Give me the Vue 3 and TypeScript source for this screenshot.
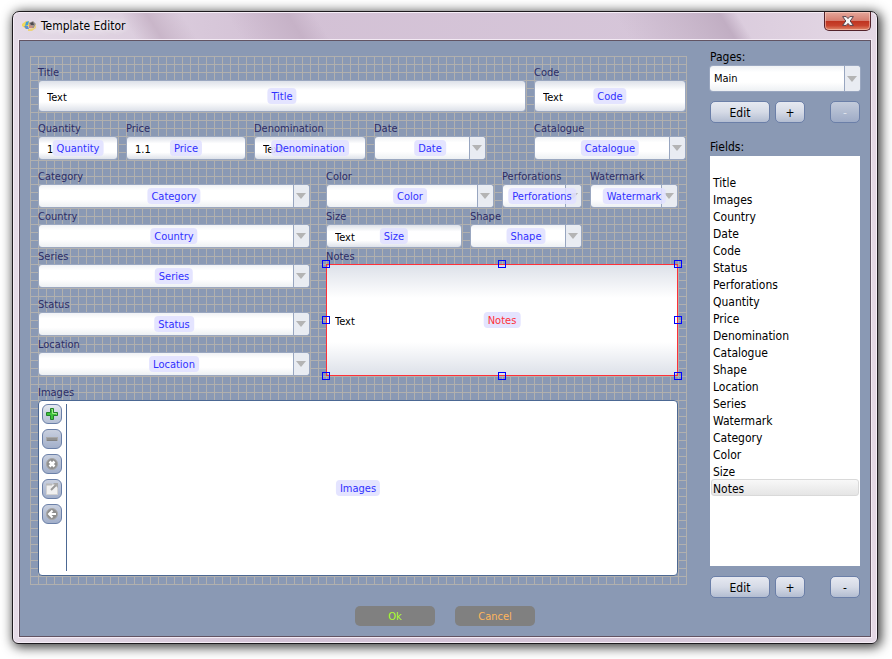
<script setup lang="ts">
import { ref } from 'vue'

type Kind = 'text' | 'combo' | 'images'

interface Field {
  name: string
  kind: Kind
  // Position and size on the canvas, in grid cells
  x: number
  y: number
  w: number
  h: number
  value?: string
}

const CELL = 8

const fields: Field[] = [
  { name: 'Title', kind: 'text', x: 1, y: 3, w: 61, h: 4, value: 'Text' },
  { name: 'Code', kind: 'text', x: 63, y: 3, w: 19, h: 4, value: 'Text' },
  { name: 'Quantity', kind: 'text', x: 1, y: 10, w: 10, h: 3, value: '1' },
  { name: 'Price', kind: 'text', x: 12, y: 10, w: 15, h: 3, value: '1.1' },
  { name: 'Denomination', kind: 'text', x: 28, y: 10, w: 14, h: 3, value: 'Text' },
  { name: 'Date', kind: 'combo', x: 43, y: 10, w: 14, h: 3 },
  { name: 'Catalogue', kind: 'combo', x: 63, y: 10, w: 19, h: 3 },
  { name: 'Category', kind: 'combo', x: 1, y: 16, w: 34, h: 3 },
  { name: 'Color', kind: 'combo', x: 37, y: 16, w: 21, h: 3 },
  { name: 'Perforations', kind: 'combo', x: 59, y: 16, w: 10, h: 3 },
  { name: 'Watermark', kind: 'combo', x: 70, y: 16, w: 11, h: 3 },
  { name: 'Country', kind: 'combo', x: 1, y: 21, w: 34, h: 3 },
  { name: 'Size', kind: 'text', x: 37, y: 21, w: 17, h: 3, value: 'Text' },
  { name: 'Shape', kind: 'combo', x: 55, y: 21, w: 14, h: 3 },
  { name: 'Series', kind: 'combo', x: 1, y: 26, w: 34, h: 3 },
  { name: 'Status', kind: 'combo', x: 1, y: 32, w: 34, h: 3 },
  { name: 'Location', kind: 'combo', x: 1, y: 37, w: 34, h: 3 },
  { name: 'Images', kind: 'images', x: 1, y: 43, w: 80, h: 22 },
  { name: 'Notes', kind: 'text', x: 37, y: 26, w: 44, h: 14, value: 'Text' },
]

const listed = [
  '', 'Title', 'Images', 'Country', 'Date', 'Code', 'Status', 'Perforations', 'Quantity',
  'Price', 'Denomination', 'Catalogue', 'Shape', 'Location', 'Series', 'Watermark',
  'Category', 'Color', 'Size', 'Notes',
]

const handles = ['nw', 'n', 'ne', 'w', 'e', 'sw', 's', 'se']
const tools = ['add', 'remove', 'clear', 'open', 'back']

const selected = ref('Notes')

const place = (f: Field) => ({
  left: `${f.x * CELL}px`,
  top: `${f.y * CELL}px`,
  width: `${f.w * CELL}px`,
  height: `${f.h * CELL}px`,
})
</script>

<template>
  <main class="window">
    <header class="titlebar">
      <svg class="logo" width="16" height="12" viewBox="0 0 16 12" aria-hidden="true">
        <path d="M1 4 L5 1 L9 2 L8 6 L5 9 L1 6z" fill="#f2d75a" />
        <path d="M5 2 L8 1 L7 5 L4 6z" fill="#3f9fd8" />
        <path d="M3 6 L7 6 L8 9 L5 9z" fill="#5b8fd0" />
        <path d="M8 3 L12 1 L15 4 L13 8 L9 8z" fill="#9a928e" />
        <path d="M9 3 L12 2 L13 5 L10 5z" fill="#4d4a50" />
        <path d="M8 5 L12 6 L11 8 L8 8z" fill="#c98b80" />
        <path d="M7 9 L13 8 L15 4 L15 8 L11 11 L7 11z" fill="#edd27a" />
      </svg>
      <h1>Template Editor</h1>
      <button class="close" type="button" aria-label="Close">
        <svg width="12" height="10" viewBox="0 0 12 10">
          <path
            d="M.6.6H4.200L6 2.600 7.800 .6H11.400L8.200 5 11.400 9.400H7.800L6 7.400 4.200 9.400H.6L3.800 5z"
            fill="#f8f8f8" stroke="#54424c" stroke-width="1" stroke-linejoin="round"
          />
        </svg>
      </button>
    </header>

    <form class="client" @submit.prevent>
      <div class="columns">
        <section class="canvas">
          <div
            v-for="f in fields" :key="f.name"
            class="item" :class="{ active: f.name === selected }" :style="place(f)"
            @click="selected = f.name"
          >
            <label class="caption" :for="`f-${f.name}`">{{ f.name }}</label>
            <input
              v-if="f.kind === 'text'" :id="`f-${f.name}`"
              class="box text" type="text" :value="f.value"
            >
            <div v-else-if="f.kind === 'combo'" class="box combo">
              <select :id="`f-${f.name}`"></select>
              <span class="arrow"></span>
            </div>
            <div v-else class="gallery">
              <div class="tools">
                <button
                  v-for="t in tools" :id="t === 'add' ? `f-${f.name}` : undefined" :key="t"
                  class="tool" :class="{ off: t !== 'add' }" type="button" :aria-label="t"
                >
                  <svg width="14" height="14" viewBox="0 0 14 14">
                    <template v-if="t === 'add'">
                      <path d="M5.5 1.5h3v4h4v3h-4v4h-3v-4h-4v-3h4z" fill="#3fc43a" stroke="#23802a" />
                      <path d="M6.5 2.5h1v4h4v1" fill="none" stroke="#a5ec8f" />
                    </template>
                    <template v-else-if="t === 'remove'">
                      <rect x="1.5" y="5.5" width="11" height="3" fill="#929292" stroke="#a9a9a9" />
                      <path d="M2 8.5h10" stroke="#828282" />
                    </template>
                    <template v-else-if="t === 'clear'">
                      <circle cx="7" cy="7" r="5.5" fill="#8e8e8e" stroke="#a6a6a6" />
                      <path d="M4.5 4.5l5 5M9.5 4.5l-5 5" stroke="#fff" stroke-width="2.5" />
                    </template>
                    <template v-else-if="t === 'open'">
                      <path d="M1.5 2.5h11v10h-11z" fill="#f0f0f0" stroke="#d2d2d2" />
                      <path d="M1 2.5h6" stroke="#bbb" stroke-width="2" />
                      <path d="M6 8l5-5" stroke="#999" stroke-width="2" />
                      <path d="M8 1h5v5z" fill="#a9a9a9" />
                    </template>
                    <template v-else>
                      <circle cx="7" cy="7" r="5.5" fill="#8e8e8e" stroke="#a6a6a6" />
                      <path d="M11 7H5M7.5 3.5L4 7l3.5 3.5" fill="none" stroke="#fff" stroke-width="2" />
                    </template>
                  </svg>
                </button>
              </div>
            </div>
            <span class="tag">{{ f.name }}</span>
            <template v-if="f.name === selected">
              <i v-for="h in handles" :key="h" class="handle" :class="h"></i>
            </template>
          </div>
        </section>

        <aside class="side">
          <label for="pages">Pages:</label>
          <div class="box combo">
            <select id="pages"><option>Main</option></select>
            <span class="arrow"></span>
          </div>
          <div class="actions">
            <button class="push wide" type="button">Edit</button>
            <button class="push" type="button">+</button>
            <button class="push last" type="button" disabled>-</button>
          </div>
          <label class="second" for="fields">Fields:</label>
          <select id="fields" v-model="selected" class="list" size="24">
            <option v-for="name in listed" :key="name" :value="name">{{ name }}</option>
          </select>
          <div class="actions">
            <button class="push wide" type="button">Edit</button>
            <button class="push" type="button">+</button>
            <button class="push last" type="button">-</button>
          </div>
        </aside>
      </div>

      <footer class="footer">
        <button class="flat ok" type="submit">Ok</button>
        <button class="flat cancel" type="button">Cancel</button>
      </footer>
    </form>
  </main>
</template>

<style>
body {
  background: #fff;
}
</style>

<style scoped>
* {
  box-sizing: border-box;
}

.window,
.window button,
.window input,
.window select {
  font-family: "DejaVu Sans Condensed", "DejaVu Sans", sans-serif;
  font-size: 12px;
}

.window {
  margin: 11px 14px 15px 12px;
  padding: 0 6px 6px;
  border: 1px solid #1d1a1e;
  border-radius: 7px 7px 6px 6px;
  background:
    linear-gradient(58deg, transparent 0 14%, #c9b6c9 17%, transparent 21% 26%, #c6b2c7 33%, transparent 36% 70%, #c1aec3 82%, transparent 84%) 0 0 / 100% 28px no-repeat,
    linear-gradient(90deg, #e5dbe7, #d3c1d5 30%, #d6c6d9 75%, #e4d8e5);
  box-shadow: inset 0 0 0 1px #f6eef7, 2px 2px 12px 1px rgba(0, 0, 0, 0.8);
}

.titlebar {
  display: flex;
  align-items: flex-start;
  height: 28px;
}

.logo {
  margin: 8px 4px 0 2px;
}

.titlebar h1 {
  flex: 1;
  margin: 0;
  font-size: 12px;
  font-weight: 400;
  line-height: 28px;
  color: #000;
  text-shadow: 0 0 8px #fff, 0 0 8px #fff;
}

.close {
  display: flex;
  align-items: center;
  justify-content: center;
  width: 47px;
  height: 19px;
  padding: 0;
  border: 1px solid #54222b;
  border-top: 0;
  border-radius: 0 0 5px 5px;
  background: linear-gradient(#e5a79b, #d57e70 48%, #bf3420 52%, #c8432e 75%, #e08a6c);
  box-shadow: inset 0 0 0 1px rgba(255, 220, 210, 0.5);
}

.client {
  padding: 8px 10px 10px;
  border: 1px solid #625463;
  outline: 1px solid #f3eaf4;
  background: #8a99b4;
}

.columns {
  display: flex;
  justify-content: space-between;
  align-items: flex-start;
}

.canvas {
  position: relative;
  width: 657px;
  height: 529px;
  margin-top: 7px;
  background:
    linear-gradient(#b1b0ae 1px, transparent 1px) 0 0 / 8px 8px,
    linear-gradient(90deg, #b1b0ae 1px, transparent 1px) 0 0 / 8px 8px;
}

.item {
  position: absolute;
  padding: 1px;
}

.caption {
  position: absolute;
  left: 0;
  bottom: 100%;
  font-size: 11px;
  line-height: 14px;
  color: #2c2c66;
  white-space: nowrap;
}

.box {
  display: block;
  width: 100%;
  height: 100%;
  border: 0;
  border-radius: 3px;
  box-shadow: 0 0 0 1px #9aa7c0;
}

.text {
  padding: 2px 8px 0;
  outline: 0;
  background: linear-gradient(#dde1e9, #fff 30%, #fff 70%, #dde1e9);
  color: #000;
}

.window .text {
  font-size: 11px;
}

.combo {
  display: flex;
  overflow: hidden;
  background: linear-gradient(#f0f2f5, #fff 25%, #fff 65%, #edf0f3);
}

.combo select {
  flex: 1;
  min-width: 0;
  padding: 0 4px;
  appearance: none;
  border: 0;
  outline: 0;
  background: transparent;
  color: #000;
}

.window .combo select {
  font-size: 11px;
}

.arrow {
  display: flex;
  align-items: center;
  justify-content: center;
  width: 16px;
  padding-right: 1px;
  border-left: 1px solid #98a6c0;
  background: #e9ecf2;
  pointer-events: none;
}

.arrow::before {
  content: "";
  border: 5px solid transparent;
  border-top: 6px solid #b4b4b4;
  border-bottom: 0;
}

.tag {
  position: absolute;
  left: 50%;
  top: 50%;
  padding: 1px 4px 0;
  border-radius: 4px;
  background: rgba(224, 224, 255, 0.88);
  font-size: 11px;
  line-height: 15px;
  color: #3030ff;
  white-space: nowrap;
  transform: translate(-50%, -50%);
}

.active::after {
  content: "";
  position: absolute;
  inset: 0;
  border: 1px solid #ff3038;
  pointer-events: none;
}

.active .tag {
  color: #ff3038;
}

.handle {
  position: absolute;
  z-index: 1;
  width: 8px;
  height: 8px;
  margin: -4px;
  border: 1px solid #00f;
}

.nw, .w, .sw { left: 0; }
.n, .s { left: 50%; }
.ne, .e, .se { left: 100%; }
.nw, .n, .ne { top: 0; }
.w, .e { top: 50%; }
.sw, .s, .se { top: 100%; }

.gallery {
  height: 176px;
  margin: -1px;
  padding: 3px 3px 4px;
  border: 1px solid #4c6893;
  border-radius: 4px;
  background: #fff;
}

.tools {
  display: flex;
  flex-direction: column;
  gap: 5px;
  width: 25px;
  height: 100%;
  border-right: 1px solid #4c6893;
}

.tool {
  display: flex;
  align-items: center;
  justify-content: center;
  width: 20px;
  height: 20px;
  padding: 0;
  border: 1px solid #6b80a8;
  border-radius: 6px;
  background: linear-gradient(#e4e8f0, #b5c0d5);
}

.off {
  background: linear-gradient(#c9d0df, #a2afca);
}

.side {
  display: flex;
  flex-direction: column;
  width: 150px;
  color: #000;
}

.side label {
  margin-bottom: 1px;
  line-height: 16px;
}

.side .second {
  margin-top: 16px;
}

.side .combo {
  height: 25px;
}

.list {
  height: 410px;
  padding: 0 1px;
  overflow: hidden;
  appearance: none;
  border: 0;
  border-radius: 0;
  outline: 0;
  background: #fff;
  color: #000;
}

.list option {
  height: 17px;
  min-height: 17px;
  padding: 2px 1px 0;
  border: 1px solid transparent;
  line-height: 13px;
}

.list option:checked {
  border-color: #d9d9d9;
  border-radius: 3px;
  background: linear-gradient(#f8f8f8, #e5e5e5);
  color: #000;
}

.actions {
  display: flex;
  gap: 5px;
  margin-top: 10px;
}

.push {
  width: 30px;
  height: 22px;
  padding: 1px 0 0;
  border: 1px solid #6b7fa8;
  border-radius: 5px;
  background: linear-gradient(#e6e9f1, #d5dae6 50%, #b3bdd1);
  color: #000;
}

.wide {
  width: 60px;
}

.last {
  margin-left: auto;
}

.push:disabled {
  background: linear-gradient(#c3cbdb, #9eabc6);
  color: #dde2ec;
}

.footer {
  display: flex;
  justify-content: center;
  gap: 20px;
  margin-top: 8px;
}

.flat {
  width: 80px;
  height: 20px;
  padding: 0;
  border: 0;
  border-radius: 5px;
  background: #808080;
}

.window .flat {
  font-size: 11px;
}

.ok {
  color: #adff2f;
}

.cancel {
  color: #ffb65c;
}
</style>
